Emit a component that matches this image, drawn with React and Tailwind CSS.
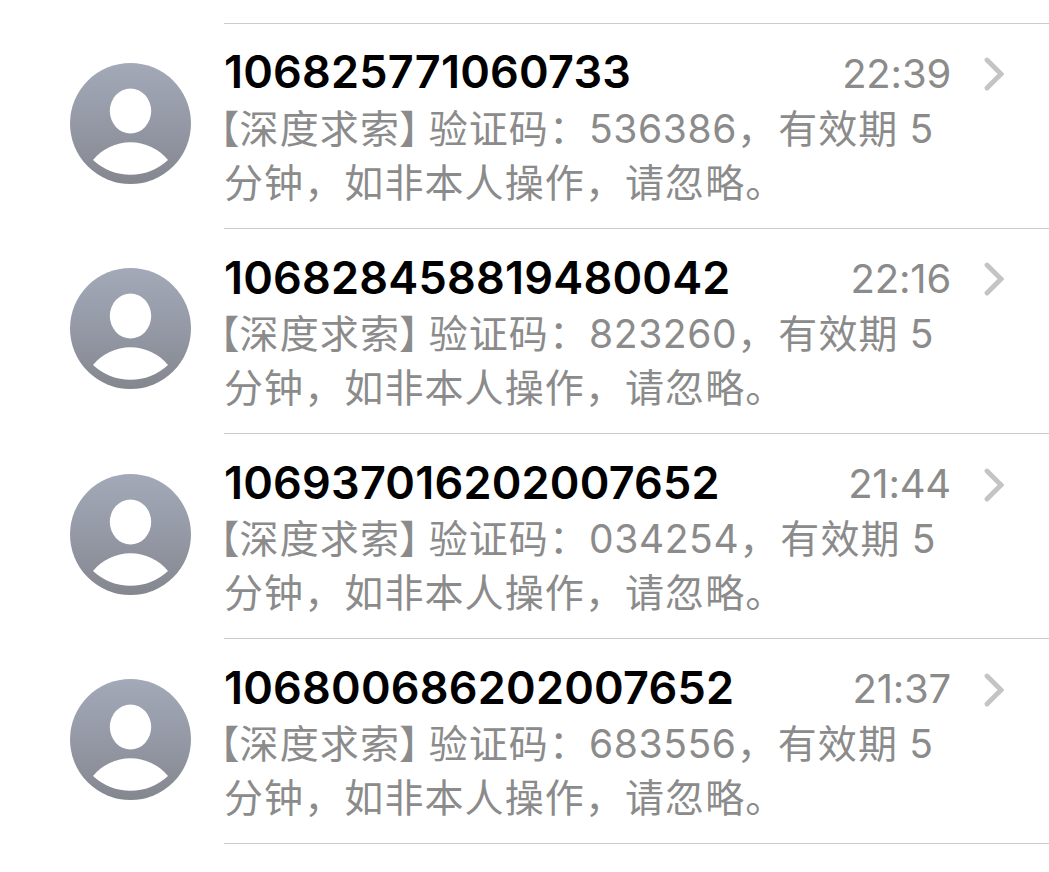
import React from 'react';

const messages = [
  { sender: '106825771060733', time: '22:39', code: '536386' },
  { sender: '106828458819480042', time: '22:16', code: '823260' },
  { sender: '106937016202007652', time: '21:44', code: '034254' },
  { sender: '106800686202007652', time: '21:37', code: '683556' },
];

function Avatar({ id }) {
  return (
    <svg viewBox="0 0 121 121" className="w-[121px] h-[121px] shrink-0">
      <defs>
        <linearGradient id={`bg-${id}`} x1="0" y1="0" x2="0" y2="1">
          <stop offset="0" stopColor="#a3a9b8" />
          <stop offset="0.5" stopColor="#9599a6" />
          <stop offset="1" stopColor="#84878e" />
        </linearGradient>
      </defs>
      <circle cx="60.5" cy="60.5" r="60.5" fill={`url(#bg-${id})`} />
      <ellipse cx="60.5" cy="48" rx="20.7" ry="22.5" fill="#fff" />
      <path d="M23 97A48.5 48.5 0 0 1 98 97A55 55 0 0 1 23 97Z" fill="#fff" />
    </svg>
  );
}

function MessageRow({ message, id }) {
  return (
    <li className="flex h-[205.3px] pl-[70px]">
      <div className="pt-[40.5px]">
        <Avatar id={id} />
      </div>
      <div className="ml-[33px] flex-1 border-t border-[#cbcbcb] pt-[20.5px]">
        <div className="flex h-[56px] items-center">
          <span className="flex-1 text-[45px] font-semibold tracking-[0.2px] text-black">{message.sender}</span>
          <span className="mt-[3px] text-[40px] tracking-[-0.2px] text-[#8b8b8b]">{message.time}</span>
          <svg viewBox="0 0 20 34" className="ml-[33px] mr-[45px] mt-[4px] h-[34px] w-[20px]" fill="none" stroke="#c4c4c4" strokeWidth="4.8" strokeLinecap="round">
            <path d="M3 3L17 17L3 31" />
          </svg>
        </div>
        <div className="mt-[1.5px] whitespace-nowrap text-[39px] leading-[54px] tracking-[1.1px] text-[#8b8b8b]">
          <p>
            <span className="-ml-[4px] [font-feature-settings:'halt']">【</span>
            <span className="-ml-[1px]">深度求索</span>
            <span className="-ml-[1px] mr-[9px] [font-feature-settings:'halt']">】</span>
            验证码：<span className="tracking-[0.6px]">{message.code}</span>，
            <span className="ml-[1px]">有效期<span className="-ml-[1px]"> 5</span></span>
          </p>
          <p>分钟，如非本人操作，请忽略。</p>
        </div>
      </div>
    </li>
  );
}

export default function App() {
  return (
    <div className="h-[872px] w-[1049px] overflow-hidden bg-white pt-[22.5px] font-['Inter','Noto_Sans_CJK_SC',sans-serif]">
      <ul>
        {messages.map((message, i) => (
          <MessageRow key={message.sender} message={message} id={i} />
        ))}
      </ul>
      <div className="-mt-[0.5px] ml-[224px] border-t border-[#cbcbcb]" />
    </div>
  );
}
